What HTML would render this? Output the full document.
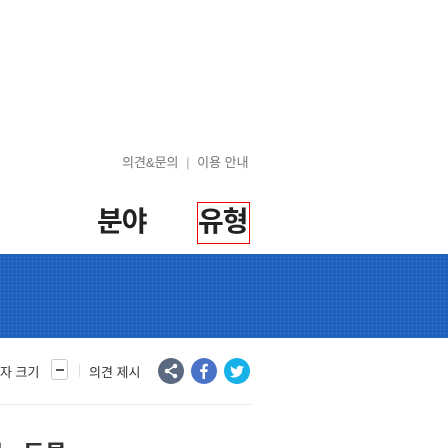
<!DOCTYPE html>
<html><head><meta charset="utf-8"><style>
html,body{margin:0;padding:0;width:448px;height:448px;overflow:hidden;background:#fff;font-family:"Liberation Sans","Noto Sans CJK KR",sans-serif;position:relative}
.a{position:absolute;white-space:nowrap}
.band{position:absolute;left:0;top:254px;width:448px;height:84px;background-color:#1b5fbe;
background-image:repeating-linear-gradient(90deg,rgba(255,255,255,.05) 0 1px,transparent 1px 4px),repeating-linear-gradient(0deg,rgba(255,255,255,.05) 0 1px,transparent 1px 4px);}
.c{position:absolute;width:26px;height:26px;border-radius:50%;top:358px}
</style></head><body>
<div class="a" style="left:122px;top:152px;font-size:13px;color:#777">의견&amp;문의 <span style="color:#aaa;margin:0 4px">|</span> 이용 안내</div>
<div class="a" style="left:97px;top:200px;font-size:28px;font-weight:bold;color:#222;letter-spacing:-1px">분야</div>
<div class="a" style="left:197px;top:202px;width:53px;height:42px;border:1px solid #e00;box-sizing:border-box"></div>
<div class="a" style="left:198px;top:200px;font-size:28px;font-weight:bold;color:#222;letter-spacing:-1px">유형</div>
<div class="band"></div>
<div class="a" style="left:-12px;top:362px;font-size:13px;color:#333">글자 크기</div>
<div class="a" style="left:51px;top:359px;width:17px;height:21px;border:1px solid #ccc;border-radius:3px;box-sizing:border-box"><div style="position:absolute;left:4px;top:9px;width:8px;height:2px;background:#555"></div></div>
<div class="a" style="left:79px;top:364px;width:1px;height:13px;background:#ddd"></div>
<div class="a" style="left:89px;top:362px;font-size:13px;color:#333">의견 제시</div>
<div class="c" style="left:158px;background:#5b6a80"><svg width="26" height="26" viewBox="0 0 26 26"><g fill="#fff"><circle cx="17" cy="8" r="2.3"/><circle cx="9" cy="13" r="2.3"/><circle cx="17" cy="18" r="2.3"/></g><path d="M17 8L9 13L17 18" stroke="#fff" stroke-width="1.6" fill="none"/></svg></div>
<div class="c" style="left:191px;background:#4a73c8"><svg width="26" height="26" viewBox="0 0 26 26"><path d="M14 21v-7h2.3l.4-2.7H14V9.6c0-.8.3-1.3 1.4-1.3h1.4V5.9c-.3 0-1.1-.1-2-.1-2 0-3.3 1.2-3.3 3.4v2.1H9.2V14h2.3v7z" fill="#fff"/></svg></div>
<div class="c" style="left:224px;background:#17b1e8"><svg width="26" height="26" viewBox="0 0 26 26"><path d="M20 9c-.5.2-1 .4-1.6.4.6-.3 1-.9 1.2-1.5-.5.3-1.1.5-1.8.7a2.8 2.8 0 0 0-4.8 2.5c-2.3-.1-4.4-1.2-5.8-2.9-.8 1.3-.3 2.9.9 3.7-.5 0-.9-.1-1.3-.3 0 1.4 1 2.5 2.300 2.8-.4.1-.9.1-1.3 0 .4 1.1 1.4 1.9 2.6 1.9A5.6 5.6 0 0 1 6 18.2 8 8 0 0 0 18.3 11.1V10.7c.7-.4 1.2-1 1.7-1.700z" fill="#fff"/></svg></div>
<div class="a" style="left:0;top:404px;width:251px;height:1px;background:#e6e6e6"></div>
<div class="a" style="left:-6px;top:440px;font-size:24px;line-height:30px;font-weight:bold;color:#333">는 동물</div>
</body></html>
